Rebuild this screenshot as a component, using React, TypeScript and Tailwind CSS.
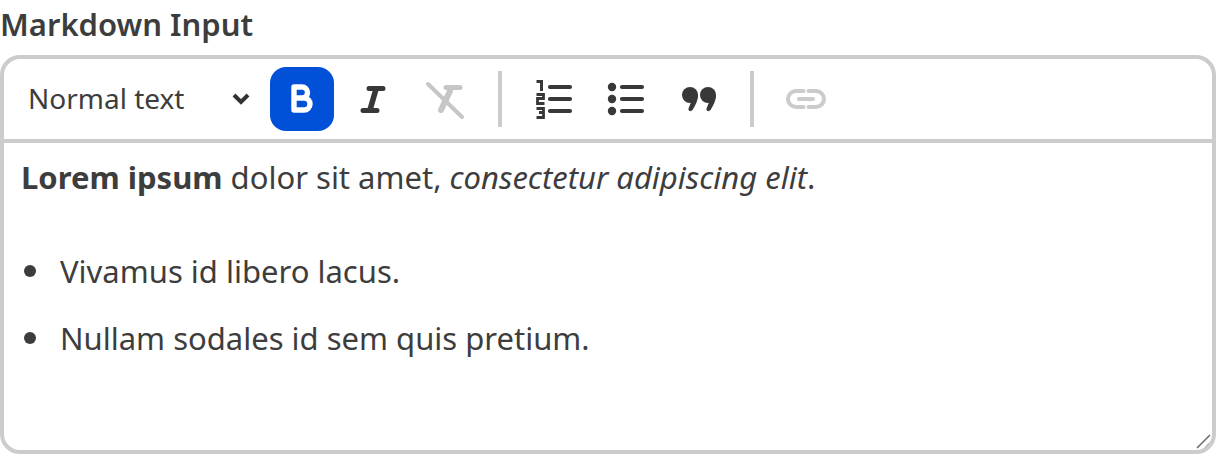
const ICON_DARK = '#383838';

function BoldIcon() {
  return (
    <svg width="64" height="64" viewBox="0 0 64 64" fill="none" stroke="#fff" strokeWidth="5.400" strokeLinejoin="round">
      <path d="M24 20h8a5.500 5.500 0 0 1 0 11h-8zM24 31h10a6 6 0 0 1 0 12H24z" />
    </svg>
  );
}

function ItalicIcon() {
  return (
    <svg width="64" height="64" viewBox="0 0 64 64" fill="none" stroke={ICON_DARK} strokeLinecap="round">
      <path d="M29 21.500h14M23 43.500h14" strokeWidth="5" />
      <path d="M36 22l-6 21" strokeWidth="5.600" strokeLinecap="butt" />
    </svg>
  );
}

function ClearIcon() {
  return (
    <svg width="64" height="64" viewBox="0 0 64 64" fill="none" stroke="#c6c6c6" strokeLinecap="round">
      <path d="M15 17l34 33" strokeWidth="4" />
      <path d="M33 20.500h14" strokeWidth="5" />
      <path d="M37 24l-9 19" strokeWidth="6" />
    </svg>
  );
}

function OrderedIcon() {
  return (
    <svg width="64" height="64" viewBox="0 0 64 64" fill="none" stroke={ICON_DARK}>
      <path d="M28 20h20M28 32h20M28 44h20" strokeWidth="4.200" strokeLinecap="round" />
      <path d="M14.500 14.500h5V24" strokeWidth="3" />
      <path d="M14.500 27.500h7v4H15.500v5h7" strokeWidth="2.800" />
      <path d="M14.500 41.500h7v4h-4.500M21.500 45.500v5H14.500" strokeWidth="2.800" />
    </svg>
  );
}

function BulletIcon() {
  return (
    <svg width="64" height="64" viewBox="0 0 64 64" fill="none" stroke={ICON_DARK}>
      <path d="M28 20h20M28 32h20M28 44h20" strokeWidth="4.200" strokeLinecap="round" />
      <circle cx="18" cy="20" r="4.200" fill={ICON_DARK} stroke="none" />
      <circle cx="18" cy="32" r="4.200" fill={ICON_DARK} stroke="none" />
      <circle cx="18" cy="44" r="4.200" fill={ICON_DARK} stroke="none" />
    </svg>
  );
}

function QuoteIcon() {
  const tail = 'C31 34 28 39 25.500 43Q24 44.500 22.500 44Q21 43 21.500 41.500L24.500 34L20 28z';
  return (
    <svg width="64" height="64" viewBox="0 0 64 64" fill={ICON_DARK}>
      <circle cx="23" cy="28" r="8" />
      <circle cx="41" cy="28" r="8" />
      <path d={`M31 28${tail}`} />
      <path d={`M31 28${tail}`} transform="translate(18 0)" />
    </svg>
  );
}

function LinkIcon() {
  return (
    <svg width="64" height="64" viewBox="0 0 64 64" fill="none" stroke="#cbcbcb" strokeLinecap="round" strokeWidth="4">
      <path d="M29.500 24H22a8 8 0 0 0 0 16h7.500M34.500 24H42a8 8 0 0 1 0 16h-7.500M25 32h14" />
    </svg>
  );
}

function Grip() {
  return (
    <svg className="absolute right-0 bottom-[1px]" width="16" height="16" viewBox="0 0 16 16" fill="none" stroke="#6a6a6a" strokeWidth="1.500">
      <path d="M1 15L14 2M9 15l5-5" />
    </svg>
  );
}

export default function App() {
  return (
    <div className="h-[454px] w-[1216px] overflow-hidden bg-white font-['Noto_Sans',sans-serif] text-[#3d3d3d]">
      <label className="block h-[55px] text-[31px] leading-[48px] font-semibold">Markdown Input</label>
      <div className="h-[399px] overflow-hidden rounded-[20px] border-4 border-[#ccc]">
        <div className="flex h-[84px] items-center border-b-4 border-[#ccc] pl-[24px]">
          <div className="flex w-[242px] items-center justify-between pr-[19px]">
            <span className="pb-[2px] text-[28px] leading-none">Normal text</span>
            <svg width="20" height="14" viewBox="0 0 20 14" fill="none" stroke="#333" strokeWidth="4">
              <path d="M3 3l7 7 7-7" />
            </svg>
          </div>
          <button className="h-[64px] w-[64px] rounded-[16px] bg-[#0050d8]">
            <BoldIcon />
          </button>
          <button className="ml-[6px] h-[64px] w-[64px]">
            <ItalicIcon />
          </button>
          <button className="ml-[9px] h-[64px] w-[64px]">
            <ClearIcon />
          </button>
          <div className="ml-[21px] h-[56px] w-[4px] bg-[#ccc]" />
          <button className="ml-[20px] h-[64px] w-[64px]">
            <OrderedIcon />
          </button>
          <button className="ml-[8px] h-[64px] w-[64px]">
            <BulletIcon />
          </button>
          <button className="ml-[9px] h-[64px] w-[64px]">
            <QuoteIcon />
          </button>
          <div className="ml-[19px] h-[56px] w-[4px] bg-[#ccc]" />
          <button className="ml-[20px] h-[64px] w-[64px]">
            <LinkIcon />
          </button>
        </div>
        <div className="relative h-[307px] pl-[17px] pt-[10px] text-[31px] leading-[48px]">
          <p>
            <strong className="font-bold">Lorem ipsum</strong> dolor sit amet, <em>consectetur adipiscing elit</em>.
          </p>
          <ul className="mt-[46px]">
            <li className="flex items-center gap-[24px] pl-[3px]">
              <span className="h-[12px] w-[12px] rounded-full bg-[#3d3d3d]" />
              Vivamus id libero lacus.
            </li>
            <li className="mt-[19px] flex items-center gap-[24px] pl-[3px]">
              <span className="h-[12px] w-[12px] rounded-full bg-[#3d3d3d]" />
              Nullam sodales id sem quis pretium.
            </li>
          </ul>
          <Grip />
        </div>
      </div>
    </div>
  );
}
